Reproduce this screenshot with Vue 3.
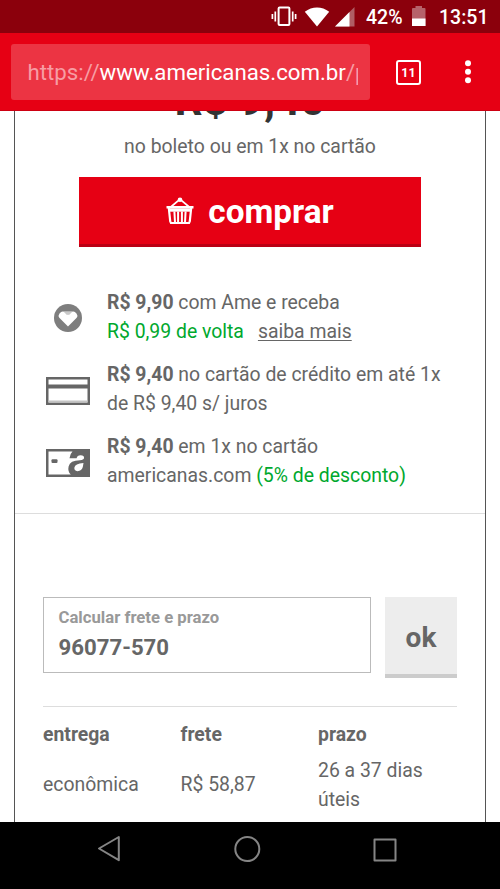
<script setup>
const shipping = [
  { type: 'econômica', price: 'R$ 58,87', time: '26 a 37 dias úteis' },
]
</script>

<template>
  <div class="phone">
    <header class="status">
      <svg class="vibrate" width="26" height="21" viewBox="0 0 26 21">
        <rect x="7.6" y="1.5" width="10.8" height="17.6" rx="1" fill="none" stroke="#fff" stroke-width="2" />
        <path d="M4.3 5.5v10M1.4 8v5M21.7 5.5v10M24.6 8v5" stroke="#fff" stroke-width="1.7" />
      </svg>
      <svg class="wifi" width="26" height="20" viewBox="0 0 26 20">
        <path d="M.8 4.8C8-1.1 18-1.1 25.2 4.8L13 19.6Z" fill="#fff" />
      </svg>
      <svg class="signal" width="20" height="20" viewBox="0 0 20 20">
        <path d="M0 19.5 19.5 0V19.5Z" fill="#b05d64" />
        <path d="M0 19.5 14.5 5V19.5Z" fill="#fff" />
      </svg>
      <span class="percent">42%</span>
      <svg class="battery" width="14" height="21" viewBox="0 0 14 21">
        <path d="M0 2.8Q0 2 1 2H3.5V0H10V2H12.5Q13.5 2 13.5 3V20H0Z" fill="#b6626a" />
        <path d="M0 12.5H13.5V20H0Z" fill="#fff" />
      </svg>
      <span class="clock">13:51</span>
    </header>

    <div class="toolbar">
      <div class="url"><div class="address"><span class="dim">https://</span>www.americanas.com.br<span class="dim">/p</span></div></div>
      <div class="tabs">11</div>
      <svg class="more" width="8" height="24" viewBox="0 0 8 24" fill="#fff">
        <circle cx="4" cy="3.2" r="3" /><circle cx="4" cy="11.8" r="3" /><circle cx="4" cy="20.3" r="3" />
      </svg>
    </div>

    <main class="page">
      <div class="card">
        <section class="offer">
          <div class="price">R$ 9,40</div>
          <p class="terms">no boleto ou em 1x no cartão</p>
          <button class="buy">
            <svg width="28" height="28" viewBox="0 0 28 28" fill="none" stroke="#fff">
              <path d="M4.8 10 13.2 2.8H14.8L23.2 10" stroke-width="1.7" />
              <circle cx="14" cy="2.8" r="2.3" fill="#fff" stroke="none" />
              <path d="M.5 9H27.5V11.5H.5Z" fill="#fff" stroke="none" />
              <path d="M2.8 11 4.2 24.2Q4.5 26 6 26H22Q23.5 26 23.8 24.2L25.2 11" stroke-width="2.2" />
              <path d="M3.5 13H24.5" stroke-width="3.4" />
              <path d="M8.4 14.5 9 25.5M12.1 14.5V25.5M15.9 14.5V25.5M19.6 14.5 19 25.5" stroke-width="2" />
            </svg>
            <span>comprar</span>
          </button>
          <ul class="payments">
            <li>
              <span class="icon">
                <svg class="ame" width="28" height="28" viewBox="0 0 28 28">
                  <circle cx="14" cy="14" r="14" fill="#7e7e7e" />
                  <path d="M9.2 7.2H18.8L14 12Z" fill="#c9c9c9" />
                  <path d="M14 22.5 5.3 13.7Q3.8 11.6 5.5 9.4L7.1 7.9Q9.2 6.8 11.2 9Q14 12.8 16.8 9Q18.8 6.8 20.9 7.9L22.5 9.4Q24.2 11.6 22.7 13.7Z" fill="#fff" />
                </svg>
              </span>
              <p><b>R$ 9,90</b> com Ame e receba<br><span class="green">R$ 0,99 de volta</span><a class="link">saiba mais</a></p>
            </li>
            <li>
              <span class="icon">
                <svg class="bank" width="44" height="28" viewBox="0 0 44 28">
                  <path d="M1.25 1.25H42.75V26.75H1.25Z" fill="#fff" stroke="#666" stroke-width="2.5" />
                  <path d="M1 7.5H43V11.5H1Z" fill="#666" />
                  <path d="M2.5 23.5H41.5V25.5H2.5Z" fill="#c4c4c4" />
                </svg>
              </span>
              <p><b>R$ 9,40</b> no cartão de crédito em até 1x<br>de R$ 9,40 s/ juros</p>
            </li>
            <li>
              <span class="icon">
                <svg class="bank" width="44" height="28" viewBox="0 0 44 28">
                  <path d="M0 0H44V28H0Z" fill="#666" />
                  <path d="M2.5 2.5H26.5Q24.200 4.500 23.500 9.300L30.600 9.300Q31.200 6.200 34.500 6.200Q38.500 6.300 38 9.300Q37.600 11 34 11.200Q24 11.300 22.600 17.500Q21.500 22.500 24.800 25.500H2.5Z" fill="#fff" />
                  <path d="M37.500 14 36.800 18Q35.800 22 31.500 22.200Q27.900 21.800 28.400 18.500Q29 14.500 37.500 14Z" fill="#fff" />
                  <rect x="5.5" y="10.3" width="6" height="3.7" rx="1" fill="#666" />
                </svg>
              </span>
              <p><b>R$ 9,40</b> em 1x no cartão<br>americanas.com <span class="green">(5% de desconto)</span></p>
            </li>
          </ul>
        </section>

        <section class="freight">
          <div class="form">
            <label class="field"><span class="caption">Calcular frete e prazo</span><span class="value">96077-570</span></label>
            <button class="ok">ok</button>
          </div>
          <div class="table">
            <div class="row head"><span>entrega</span><span>frete</span><span>prazo</span></div>
            <div v-for="s in shipping" :key="s.type" class="row">
              <span>{{ s.type }}</span><span>{{ s.price }}</span><span class="time">{{ s.time }}</span>
            </div>
          </div>
        </section>
      </div>
    </main>

    <nav class="nav">
      <svg width="24" height="28" viewBox="0 0 24 28"><path d="M1 13.5 20.8 2V25.2Z" fill="none" stroke="#858585" stroke-width="2" stroke-linejoin="round" /></svg>
      <svg width="28" height="28" viewBox="0 0 28 28"><circle cx="13.3" cy="14" r="12" fill="none" stroke="#858585" stroke-width="2" /></svg>
      <svg width="24" height="28" viewBox="0 0 24 28"><rect x="1.5" y="4.5" width="21" height="21" fill="none" stroke="#858585" stroke-width="2" stroke-linejoin="round" /></svg>
    </nav>
  </div>
</template>

<style>
body { margin: 0; overflow: hidden; }
</style>

<style scoped>
* { box-sizing: border-box; }
p, ul { margin: 0; padding: 0; list-style: none; }
svg { display: block; flex: none; }
button { border: 0; padding: 0; font-family: inherit; }
.phone { width: 500px; height: 889px; display: flex; flex-direction: column; font-family: Roboto, sans-serif; font-size: 19.4px; line-height: 29px; color: #666; background: #fff; overflow: hidden; }
.status { height: 33px; flex: none; background: #8b000c; color: #fff; display: flex; align-items: center; padding-left: 271px; white-space: nowrap; }
.status span { font-size: 19.5px; font-weight: 500; line-height: 33px; padding-top: 2px; }
.wifi { margin-left: 7px; }
.signal { margin-left: 5px; }
.percent { width: 37px; margin-left: 11px; }
.battery { margin-left: 9px; }
.status .clock { margin-left: 13px; }
.toolbar { height: 78px; flex: none; background: #e60014; display: flex; align-items: center; padding-left: 11px; border-bottom: 1px solid #cd0012; }
.url { width: 359px; height: 56px; margin-bottom: -1px; border-radius: 3px; background: #ec3443; color: #fff; padding: 0 12px 0 16.5px; font-size: 22.25px; line-height: 57px; white-space: nowrap; }
.address { overflow: hidden; height: 56px; }
.dim { color: #f79da4; }
.tabs { width: 25px; height: 25px; margin: 1px 0 0 26px; border: 2px solid #fff; border-radius: 3px; color: #fff; text-align: center; font-size: 12.5px; line-height: 22px; font-weight: 700; }
.more { margin: 1px 0 0 43px; }
.page { height: 711px; flex: none; padding: 0 14px; overflow: hidden; }
.card { height: 720px; border: solid #555; border-width: 0 1px; }
.offer { height: 403px; border-bottom: 1px solid #ddd; display: flex; flex-direction: column; align-items: center; padding: 0 28px; }
.price { height: 51px; margin-top: -30px; color: #333; font-size: 44px; font-weight: 700; line-height: 39px; flex: none; }
.terms { line-height: 29px; }
.buy { width: 342px; height: 70px; margin-top: 16px; padding-top: 1px; flex: none; background: #e60014; border-bottom: 3px solid #ba0014; color: #fff; display: flex; align-items: center; justify-content: center; gap: 14px; font-size: 33.3px; font-weight: 700; }
.payments { width: 100%; margin-top: 41px; display: flex; flex-direction: column; gap: 14px; }
.payments li { display: flex; align-items: center; white-space: nowrap; }
.icon { width: 50px; margin-right: 14px; display: flex; justify-content: center; }
.ame { margin-top: 2px; }
.bank { margin-top: 3px; }
.green { color: #00a82d; }
.link { margin-left: 14px; text-decoration: underline; text-underline-offset: 2px; text-decoration-thickness: 1px; }
.freight { padding: 83px 28px 0; }
.form { display: flex; justify-content: space-between; }
.field { width: 328px; height: 76px; border: 1px solid #bbb; padding: 5px 14px 5px 14.5px; display: flex; flex-direction: column; font-weight: 700; }
.caption { font-size: 16.7px; color: #999; line-height: 30px; }
.value { font-size: 22.2px; line-height: 28px; }
.ok { width: 72px; height: 81px; background: #ededed; border-bottom: 4px solid #ccc; color: #666; font-size: 28px; line-height: 81px; font-weight: 700; }
.table { margin-top: 28px; border-top: 1px solid #ddd; padding-top: 13px; }
.row { display: grid; grid-template-columns: 137.5px 137.5px 1fr; align-items: center; padding-bottom: 7px; }
.head { font-weight: 700; }
.time { width: 120px; }
.row:not(.head) > :not(.time) { padding-bottom: 1px; }
.nav { flex: 1; background: #000; display: flex; align-items: flex-start; justify-content: space-between; padding: 13px 103px 0 98px; }
</style>
